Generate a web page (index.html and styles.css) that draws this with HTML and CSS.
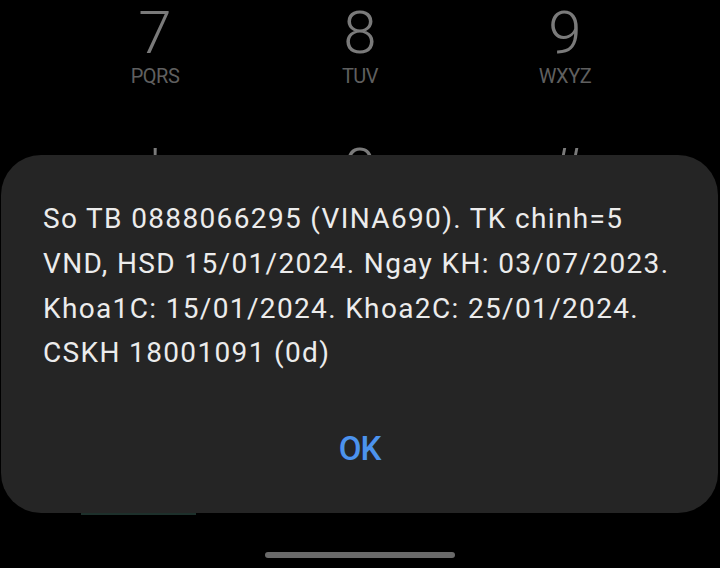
FILE: index.html
```html
<!DOCTYPE html>
<html lang="vi">
<head>
<meta charset="utf-8">
<title>USSD</title>
<link rel="stylesheet" href="styles.css">
</head>
<body>
<div class="screen">
  <div class="keypad">
    <div class="key"><span class="digit">7</span><span class="letters">PQRS</span></div>
    <div class="key"><span class="digit">8</span><span class="letters">TUV</span></div>
    <div class="key"><span class="digit">9</span><span class="letters">WXYZ</span></div>
    <div class="key"><span class="digit sym">*</span><span class="letters">&nbsp;</span></div>
    <div class="key"><span class="digit">0</span><span class="letters">+</span></div>
    <div class="key"><span class="digit sym">#</span><span class="letters">&nbsp;</span></div>
  </div>
  <div class="actions">
    <div class="call-btn"></div>
  </div>
  <div class="home-bar"></div>

  <div class="dialog">
    <p class="message">So TB 0888066295 (VINA690). TK chinh=5 VND, HSD 15/01/2024. Ngay KH: 03/07/2023. Khoa1C: 15/01/2024. Khoa2C: 25/01/2024. CSKH 18001091 (0d)</p>
    <div class="dialog-actions"><span class="ok">OK</span></div>
  </div>
</div>
</body>
</html>
```

FILE: styles.css
```css
* { box-sizing: border-box; }
html, body {
  margin: 0;
  padding: 0;
  background: #000;
  width: 720px;
  height: 568px;
  overflow: hidden;
}
.screen {
  position: relative;
  width: 720px;
  height: 568px;
  font-family: Roboto, "Noto Sans", sans-serif;
}
.keypad {
  display: grid;
  grid-template-columns: repeat(3, 205px);
  justify-content: center;
  row-gap: 14px;
  padding-top: 1px;
}
.key {
  display: flex;
  flex-direction: column;
  align-items: center;
  height: 123px;
}
.digit {
  font-size: 60px;
  font-weight: 300;
  color: #7a7a7a;
  line-height: 64px;
}
.letters {
  font-size: 20px;
  color: #5f5f5f;
  line-height: 22px;
  letter-spacing: -0.5px;
}
.actions {
  display: grid;
  grid-template-columns: repeat(3, 205px);
  justify-content: center;
  margin-top: 194px;
}
.call-btn {
  width: 115px;
  height: 60px;
  margin-left: 28px;
  background: #1d302b;
}
.home-bar {
  position: absolute;
  left: 265px;
  top: 552px;
  width: 190px;
  height: 6px;
  border-radius: 3px;
  background: #6a6a6a;
}
.dialog {
  position: absolute;
  left: 1px;
  top: 155px;
  width: 717px;
  height: 358px;
  background: #252525;
  border-radius: 40px;
  padding: 42px 42px 0 42px;
  display: flex;
  flex-direction: column;
}
.message {
  margin: 0;
  font-size: 28px;
  line-height: 44.8px;
  letter-spacing: 1.35px;
  color: #ececec;
}
.dialog-actions {
  display: flex;
  justify-content: center;
  margin-top: 55px;
}
.ok {
  font-size: 33px;
  font-weight: 500;
  letter-spacing: -1px;
  color: #4c93ee;
  line-height: 36px;
}
```
